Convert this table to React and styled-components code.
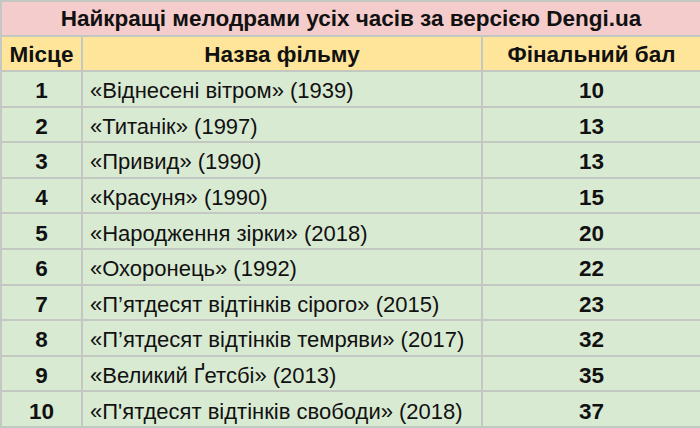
import React from "react";
import styled, { createGlobalStyle } from "styled-components";

const GlobalStyle = createGlobalStyle`
  html, body {
    margin: 0;
    padding: 0;
    background: #ffffff;
  }
  body {
    font-family: "Liberation Sans", Arial, sans-serif;
  }
`;

const Table = styled.div`
  width: 700px;
  height: 428px;
  box-sizing: border-box;
  display: grid;
  grid-template-columns: 79px 398px 1fr;
  grid-template-rows: 33px 33px repeat(10, 1fr);
  gap: 2px;
  padding: 2px 0 2px 2px;
  background: #c4c8c2;
  color: #111111;
`;

const Title = styled.div`
  grid-column: 1 / -1;
  background: #f4cccc;
  display: flex;
  align-items: center;
  justify-content: center;
  padding-top: 1px;
  font-size: 22.5px;
  font-weight: bold;
`;

const Cell = styled.div`
  background: ${(p) => (p.head ? "#ffe599" : "#d9ead3")};
  display: flex;
  align-items: center;
  justify-content: ${(p) => (p.left ? "flex-start" : "center")};
  padding-left: ${(p) => (p.left ? "7px" : "0")};
  padding-top: ${(p) => (p.head ? "3px" : "5px")};
  font-size: ${(p) => (p.bold ? "22.5px" : "22px")};
  font-weight: ${(p) => (p.bold ? "bold" : "normal")};
  white-space: nowrap;
  overflow: hidden;
`;

const films = [
  ["1", "«Віднесені вітром» (1939)", "10"],
  ["2", "«Титанік» (1997)", "13"],
  ["3", "«Привид» (1990)", "13"],
  ["4", "«Красуня» (1990)", "15"],
  ["5", "«Народження зірки» (2018)", "20"],
  ["6", "«Охоронець» (1992)", "22"],
  ["7", "«П’ятдесят відтінків сірого» (2015)", "23"],
  ["8", "«П’ятдесят відтінків темряви» (2017)", "32"],
  ["9", "«Великий Ґетсбі» (2013)", "35"],
  ["10", "«П'ятдесят відтінків свободи» (2018)", "37"],
];

export default function App() {
  return (
    <>
      <GlobalStyle />
      <Table>
        <Title>Найкращі мелодрами усіх часів за версією Dengi.ua</Title>
        <Cell head bold>Місце</Cell>
        <Cell head bold>Назва фільму</Cell>
        <Cell head bold>Фінальний бал</Cell>
        {films.map(([place, name, score]) => (
          <React.Fragment key={place}>
            <Cell bold>{place}</Cell>
            <Cell left>{name}</Cell>
            <Cell bold>{score}</Cell>
          </React.Fragment>
        ))}
      </Table>
    </>
  );
}
